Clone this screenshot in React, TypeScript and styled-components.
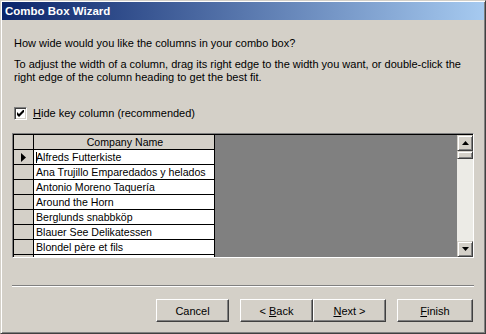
import styled, { createGlobalStyle } from "styled-components";

const GlobalStyle = createGlobalStyle`
  html, body {
    margin: 0;
    padding: 0;
    background: #d4d0c8;
  }
  body {
    font-family: "Liberation Sans", Arial, sans-serif;
    font-size: 11px;
    color: #000;
  }
`;

const Window = styled.div`
  width: 486px;
  height: 334px;
  box-sizing: border-box;
  background: #d4d0c8;
  border-top: 1px solid #d4d0c8;
  border-left: 1px solid #d4d0c8;
  border-right: 1px solid #404040;
  border-bottom: 1px solid #404040;
  box-shadow: inset 1px 1px #fff, inset -1px -1px #808080;
  padding: 1px;
  display: flex;
  flex-direction: column;
`;

const TitleBar = styled.div`
  height: 18px;
  background: linear-gradient(to right, #0a246a, #a6caf0);
  color: #fff;
  font-weight: bold;
  font-size: 11.5px;
  line-height: 18px;
  padding-left: 3px;
`;

const Content = styled.div`
  flex: 1;
  display: flex;
  flex-direction: column;
  padding: 17px 10px 0 10px;
`;

const Text = styled.p<{ $gap?: number }>`
  margin: ${(p) => p.$gap ?? 0}px 0 0 2px;
  line-height: 13px;
`;

const CheckRow = styled.label`
  margin: 22px 0 0 2px;
  height: 14px;
  display: flex;
  align-items: center;
  gap: 6px;
`;

const CheckBox = styled.span`
  width: 13px;
  height: 13px;
  box-sizing: border-box;
  background: #fff;
  border-top: 1px solid #808080;
  border-left: 1px solid #808080;
  border-right: 1px solid #fff;
  border-bottom: 1px solid #fff;
  box-shadow: inset 1px 1px #404040, inset -1px -1px #d4d0c8;
  display: flex;
  align-items: center;
  justify-content: center;
`;

const Grid = styled.div`
  margin-top: 13px;
  height: 125px;
  box-sizing: border-box;
  border-top: 1px solid #808080;
  border-left: 1px solid #808080;
  border-right: 1px solid #fff;
  border-bottom: 1px solid #fff;
  display: flex;
  overflow: hidden;
`;

const Sheet = styled.div`
  width: 201px;
  display: flex;
  flex-direction: column;
  background: #fff;
  border-top: 1px solid #000;
  border-left: 1px solid #000;
  overflow: hidden;
`;

const Row = styled.div`
  height: 15px;
  flex: none;
  display: flex;
  box-sizing: border-box;
  border-bottom: 1px solid #000;
`;

const Selector = styled.div`
  width: 19px;
  flex: none;
  background: #d4d0c8;
  border-right: 1px solid #000;
  display: flex;
  align-items: center;
  justify-content: center;
`;

const Cell = styled.div<{ $header?: boolean }>`
  flex: 1;
  font-size: 10.6px;
  line-height: 14px;
  padding-left: 2px;
  white-space: nowrap;
  overflow: hidden;
  border-right: 1px solid #000;
  background: ${(p) => (p.$header ? "#d4d0c8" : "#fff")};
  text-align: ${(p) => (p.$header ? "center" : "left")};
`;

const Empty = styled.div`
  flex: 1;
  background: #808080;
  border-top: 1px solid #000;
`;

const ScrollBar = styled.div`
  width: 16px;
  flex: none;
  display: flex;
  flex-direction: column;
  background: #ecebe6;
  border-top: 1px solid #000;
`;

const ScrollButton = styled.div`
  height: 16px;
  box-sizing: border-box;
  flex: none;
  background: #d4d0c8;
  border-top: 1px solid #d4d0c8;
  border-left: 1px solid #d4d0c8;
  border-right: 1px solid #404040;
  border-bottom: 1px solid #404040;
  box-shadow: inset 1px 1px #fff, inset -1px -1px #808080;
  display: flex;
  align-items: center;
  justify-content: center;
`;

const Thumb = styled(ScrollButton)`
  height: 8px;
`;

const Track = styled.div`
  flex: 1;
`;

const Separator = styled.div`
  margin-top: 27px;
  height: 0;
  border-top: 1px solid #808080;
  border-bottom: 1px solid #fff;
`;

const ButtonBar = styled.div`
  margin-top: 12px;
  display: flex;
  justify-content: flex-end;
  padding-right: 1px;
`;

const Button = styled.button<{ $gap?: number; $w?: number }>`
  width: ${(p) => p.$w ?? 73}px;
  height: 23px;
  margin-left: ${(p) => p.$gap ?? 0}px;
  box-sizing: border-box;
  padding: 0;
  font-family: inherit;
  font-size: 11px;
  color: #000;
  background: #d4d0c8;
  border-top: 1px solid #fff;
  border-left: 1px solid #fff;
  border-right: 1px solid #404040;
  border-bottom: 1px solid #404040;
  box-shadow: inset -1px -1px #808080;
`;

const U = styled.span`
  text-decoration: underline;
`;

const Caret = styled.span`
  display: inline-block;
  width: 1px;
  height: 11px;
  background: #000;
  margin-right: -1px;
  vertical-align: -2px;
`;

const companies = [
  "Alfreds Futterkiste",
  "Ana Trujillo Emparedados y helados",
  "Antonio Moreno Taquería",
  "Around the Horn",
  "Berglunds snabbköp",
  "Blauer See Delikatessen",
  "Blondel père et fils",
  "Bólido Comidas preparadas",
];

function Arrow({ down }: { down?: boolean }) {
  return (
    <svg width="7" height="4" viewBox="0 0 7 4">
      <path d={down ? "M0 0h7L3.5 4z" : "M3.5 0L7 4H0z"} fill="#000" />
    </svg>
  );
}

export default function App() {
  return (
    <>
      <GlobalStyle />
      <Window>
        <TitleBar>Combo Box Wizard</TitleBar>
        <Content>
          <Text>How wide would you like the columns in your combo box?</Text>
          <Text $gap={8}>
            To adjust the width of a column, drag its right edge to the width
            you want, or double-click the
            <br />
            right edge of the column heading to get the best fit.
          </Text>
          <CheckRow>
            <CheckBox>
              <svg width="7" height="7" viewBox="0 0 7 7">
                <path d="M0 2v3l2 2 5-5V-1L2 4z" fill="#000" />
              </svg>
            </CheckBox>
            <span>
              <U>H</U>ide key column (recommended)
            </span>
          </CheckRow>
          <Grid>
            <Sheet>
              <Row>
                <Selector />
                <Cell $header>Company Name</Cell>
              </Row>
              {companies.map((name, i) => (
                <Row key={name}>
                  <Selector>
                    {i === 0 && (
                      <svg width="5" height="9" viewBox="0 0 5 9">
                        <path d="M0 0l5 4.5L0 9z" fill="#000" />
                      </svg>
                    )}
                  </Selector>
                  <Cell>
                    {i === 0 && <Caret />}
                    {name}
                  </Cell>
                </Row>
              ))}
            </Sheet>
            <Empty />
            <ScrollBar>
              <ScrollButton>
                <Arrow />
              </ScrollButton>
              <Thumb />
              <Track />
              <ScrollButton>
                <Arrow down />
              </ScrollButton>
            </ScrollBar>
          </Grid>
          <Separator />
          <ButtonBar>
            <Button>Cancel</Button>
            <Button $gap={11}>
              &lt; <U>B</U>ack
            </Button>
            <Button>
              <U>N</U>ext &gt;
            </Button>
            <Button $gap={11} $w={76}>
              <U>F</U>inish
            </Button>
          </ButtonBar>
        </Content>
      </Window>
    </>
  );
}
